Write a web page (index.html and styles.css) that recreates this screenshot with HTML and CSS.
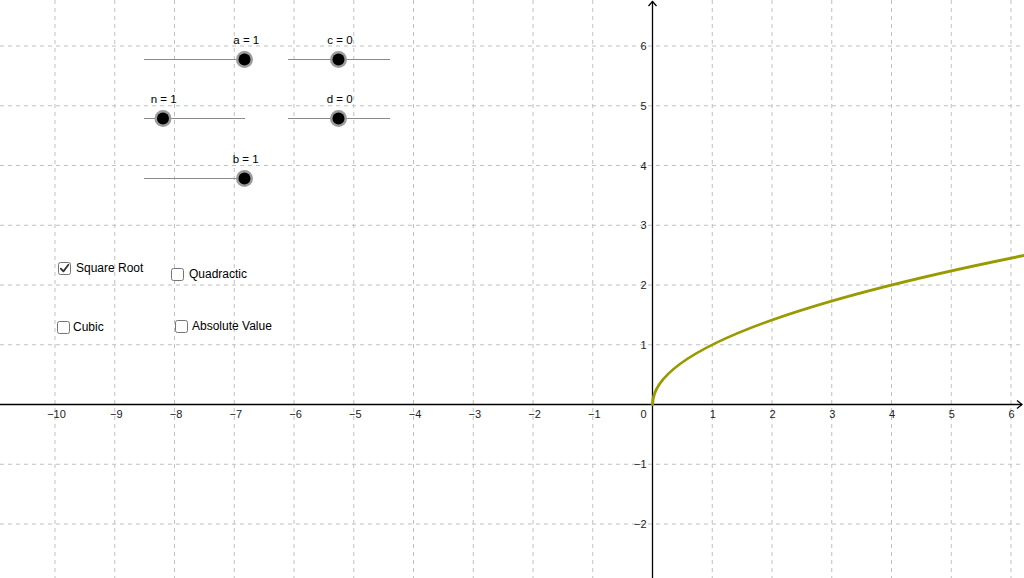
FILE: index.html
```html
<!DOCTYPE html>
<html>
<head>
<meta charset="utf-8">
<link rel="stylesheet" href="styles.css">
</head>
<body>
<div class="canvas">
  <svg class="graph" width="1024" height="578" viewBox="0 0 1024 578" xmlns="http://www.w3.org/2000/svg">
    <g class="grid">
      <line x1="55" y1="0" x2="55" y2="578"/>
      <line x1="114.75" y1="0" x2="114.75" y2="578"/>
      <line x1="174.5" y1="0" x2="174.5" y2="578"/>
      <line x1="234.25" y1="0" x2="234.25" y2="578"/>
      <line x1="294" y1="0" x2="294" y2="578"/>
      <line x1="353.75" y1="0" x2="353.75" y2="578"/>
      <line x1="413.5" y1="0" x2="413.5" y2="578"/>
      <line x1="473.25" y1="0" x2="473.25" y2="578"/>
      <line x1="533" y1="0" x2="533" y2="578"/>
      <line x1="592.75" y1="0" x2="592.75" y2="578"/>
      <line x1="712.25" y1="0" x2="712.25" y2="578"/>
      <line x1="772" y1="0" x2="772" y2="578"/>
      <line x1="831.75" y1="0" x2="831.75" y2="578"/>
      <line x1="891.5" y1="0" x2="891.5" y2="578"/>
      <line x1="951.25" y1="0" x2="951.25" y2="578"/>
      <line x1="1011" y1="0" x2="1011" y2="578"/>
      <line x1="0" y1="46" x2="1024" y2="46"/>
      <line x1="0" y1="105.75" x2="1024" y2="105.75"/>
      <line x1="0" y1="165.5" x2="1024" y2="165.5"/>
      <line x1="0" y1="225.25" x2="1024" y2="225.25"/>
      <line x1="0" y1="285" x2="1024" y2="285"/>
      <line x1="0" y1="344.75" x2="1024" y2="344.75"/>
      <line x1="0" y1="464.25" x2="1024" y2="464.25"/>
      <line x1="0" y1="524" x2="1024" y2="524"/>
    </g>
    <g class="axes">
      <line x1="0" y1="404.5" x2="1022" y2="404.5"/>
      <line x1="652.5" y1="1" x2="652.5" y2="578"/>
      <polyline points="648.5,6 652.5,1.5 656.5,6"/>
      <polyline points="1017,400.5 1022,404.5 1017,408.5"/>
    </g>
    <g class="xlabels">
      <text x="56.5" y="418">−10</text>
      <text x="116.3" y="418">−9</text>
      <text x="176" y="418">−8</text>
      <text x="235.8" y="418">−7</text>
      <text x="295.5" y="418">−6</text>
      <text x="355.3" y="418">−5</text>
      <text x="415" y="418">−4</text>
      <text x="474.8" y="418">−3</text>
      <text x="534.5" y="418">−2</text>
      <text x="594.3" y="418">−1</text>
      <text x="712.8" y="418">1</text>
      <text x="772.5" y="418">2</text>
      <text x="832.3" y="418">3</text>
      <text x="892" y="418">4</text>
      <text x="951.8" y="418">5</text>
      <text x="1011.5" y="418">6</text>
    </g>
    <g class="ylabels">
      <text x="646.5" y="418">0</text>
      <text x="646.5" y="50">6</text>
      <text x="646.5" y="109.8">5</text>
      <text x="646.5" y="169.5">4</text>
      <text x="646.5" y="229.3">3</text>
      <text x="646.5" y="289">2</text>
      <text x="646.5" y="348.8">1</text>
      <text x="646.5" y="468.3">−1</text>
      <text x="646.5" y="528">−2</text>
    </g>
    <path class="curve" d="M652.5,404.5 Q652.5,329.8 1025.9,255.1"/>
    <g class="sliders">
      <line class="track" x1="144" y1="59.5" x2="244" y2="59.5"/>
      <line class="track" x1="288" y1="59.5" x2="390" y2="59.5"/>
      <line class="track" x1="144" y1="118.5" x2="245" y2="118.5"/>
      <line class="track" x1="288" y1="118.5" x2="390" y2="118.5"/>
      <line class="track" x1="144" y1="178.5" x2="244" y2="178.5"/>
      <circle class="halo" cx="244.5" cy="59.5" r="8.5"/><circle class="knob" cx="244.5" cy="59.5" r="6"/>
      <circle class="halo" cx="338.5" cy="59.5" r="8.5"/><circle class="knob" cx="338.5" cy="59.5" r="6"/>
      <circle class="halo" cx="163" cy="118.5" r="8.5"/><circle class="knob" cx="163" cy="118.5" r="6"/>
      <circle class="halo" cx="338.5" cy="118.5" r="8.5"/><circle class="knob" cx="338.5" cy="118.5" r="6"/>
      <circle class="halo" cx="244.5" cy="178.5" r="8.5"/><circle class="knob" cx="244.5" cy="178.5" r="6"/>
      <text class="slabel" x="233.3" y="43.5">a = 1</text>
      <text class="slabel" x="327.3" y="43.5">c = 0</text>
      <text class="slabel" x="150.7" y="102.5">n = 1</text>
      <text class="slabel" x="326.7" y="102.5">d = 0</text>
      <text class="slabel" x="232.7" y="162.5">b = 1</text>
    </g>
  </svg>

  <label class="check check-sqrt">
    <span class="box checked">
      <svg width="11" height="11" viewBox="0 0 11 11"><path d="M1.8,5.6 L4.4,8.4 L9.4,1.8" fill="none" stroke="#333" stroke-width="1.8" stroke-linecap="round" stroke-linejoin="round"/></svg>
    </span>
    <span class="text">Square Root</span>
  </label>
  <label class="check check-quad">
    <span class="box"></span>
    <span class="text">Quadractic</span>
  </label>
  <label class="check check-cubic">
    <span class="box"></span>
    <span class="text">Cubic</span>
  </label>
  <label class="check check-abs">
    <span class="box"></span>
    <span class="text">Absolute Value</span>
  </label>
</div>
</body>
</html>
```

FILE: styles.css
```css
html, body {
  margin: 0;
  padding: 0;
  background: #ffffff;
}

.canvas {
  position: relative;
  width: 1024px;
  height: 578px;
  overflow: hidden;
  background: #ffffff;
  font-family: "Liberation Sans", Arial, sans-serif;
}

.graph {
  display: block;
}

.grid line {
  stroke: #c0c0c0;
  stroke-width: 1;
  stroke-dasharray: 4 4;
}

.axes line,
.axes polyline {
  stroke: #000000;
  stroke-width: 1.3;
  fill: none;
}

.xlabels text {
  font-family: "Liberation Sans", Arial, sans-serif;
  font-size: 11px;
  fill: #222222;
  text-anchor: middle;
}

.ylabels text {
  font-family: "Liberation Sans", Arial, sans-serif;
  font-size: 11px;
  fill: #222222;
  text-anchor: end;
}

.curve {
  fill: none;
  stroke: #999900;
  stroke-width: 3;
  stroke-linecap: round;
}

.track {
  stroke: #8a8a8a;
  stroke-width: 1;
}

.halo {
  fill: #9c9c9c;
}

.knob {
  fill: #000000;
}

.slabel {
  font-family: "Liberation Sans", Arial, sans-serif;
  font-size: 11.5px;
  fill: #000000;
}

.check {
  position: absolute;
  display: flex;
  align-items: center;
  gap: 5px;
  font-size: 12px;
  line-height: 14px;
  color: #000000;
}

.check-sqrt { left: 58px; top: 261px; }
.check-quad { left: 171px; top: 267px; }
.check-cubic { left: 57px; top: 320px; gap: 3px; }
.check-abs { left: 175px; top: 319px; gap: 4px; }

.box {
  width: 11px;
  height: 11px;
  border: 1.5px solid #757575;
  border-radius: 2.5px;
  background: #ffffff;
  display: flex;
  align-items: center;
  justify-content: center;
}

.box svg {
  display: block;
}
```
